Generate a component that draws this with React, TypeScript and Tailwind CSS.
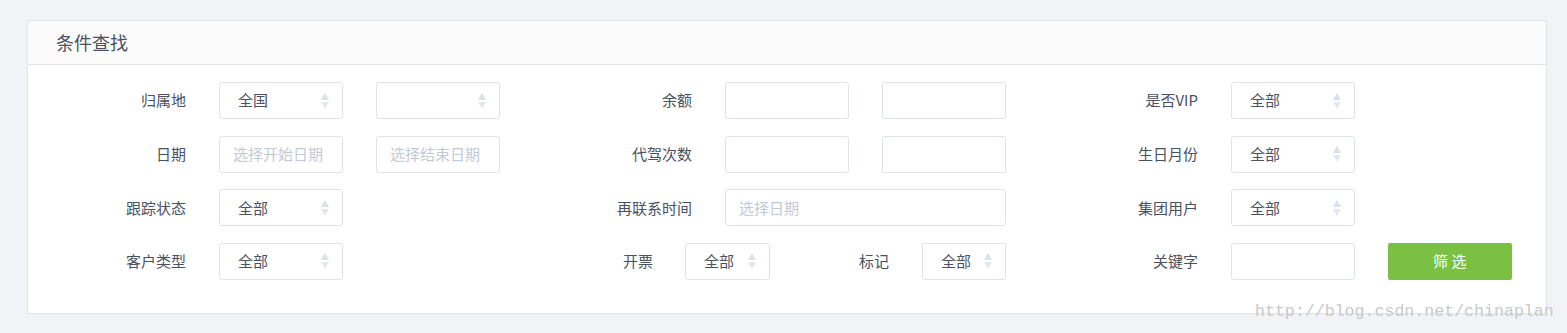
import React from "react";

const font = { fontFamily: '"Noto Sans CJK SC", "Noto Sans", sans-serif' };

const Arrows = () => (
  <svg width="8" height="16" viewBox="0 0 8 16" className="absolute right-[13px] top-1/2 -translate-y-1/2">
    <polygon points="4,0 8,7 0,7" fill="#dce0e7" />
    <polygon points="0,9 8,9 4,16" fill="#e4e8ee" />
  </svg>
);

const Select = ({ value = "", w = "w-[124px]" }: { value?: string; w?: string }) => (
  <div className={`relative h-[37px] ${w} rounded-[3px] border border-[#dfe3ea] bg-white flex items-center pl-[18px] text-[15px] text-[#4a5163]`}>
    {value}
    <Arrows />
  </div>
);

const Input = ({ placeholder = "", w = "w-[124px]" }: { placeholder?: string; w?: string }) => (
  <div className={`h-[37px] ${w} rounded-[3px] border border-[#dfe3ea] bg-white flex items-center pl-[13px] text-[15px] text-[#c3c9d4]`}>
    {placeholder}
  </div>
);

const Label = ({ text, w = "w-[100px]" }: { text: string; w?: string }) => (
  <div className={`${w} shrink-0 text-right text-[15px] text-[#4a5163]`}>{text}</div>
);

const Group = ({ children }: { children: React.ReactNode }) => (
  <div className="flex items-center gap-[33px] w-[414px]">{children}</div>
);

export default function App() {
  return (
    <div className="min-h-[333px] bg-[#f1f3f7] pt-[20px] pl-[27px] pr-[20px] relative" style={font}>
      <div className="border border-[#dfe4ea] bg-white">
        <div className="h-[44px] bg-[#fbfbfc] border-b border-[#dfe4ea] flex items-center pl-[28px] text-[18px] text-[#4a5163]">
          条件查找
        </div>
        <div className="pt-[17px] pb-[33px] pl-[58px] flex flex-col gap-[16.67px]">
          <div className="flex items-center gap-[92px]">
            <Group>
              <Label text="归属地" />
              <Select value="全国" />
              <Select />
            </Group>
            <Group>
              <Label text="余额" />
              <Input />
              <Input />
            </Group>
            <Group>
              <Label text="是否VIP" />
              <Select value="全部" />
            </Group>
          </div>
          <div className="flex items-center gap-[92px]">
            <Group>
              <Label text="日期" />
              <Input placeholder="选择开始日期" />
              <Input placeholder="选择结束日期" />
            </Group>
            <Group>
              <Label text="代驾次数" />
              <Input />
              <Input />
            </Group>
            <Group>
              <Label text="生日月份" />
              <Select value="全部" />
            </Group>
          </div>
          <div className="flex items-center gap-[92px]">
            <Group>
              <Label text="跟踪状态" />
              <Select value="全部" />
            </Group>
            <Group>
              <Label text="再联系时间" />
              <Input placeholder="选择日期" w="w-[281px]" />
            </Group>
            <Group>
              <Label text="集团用户" />
              <Select value="全部" />
            </Group>
          </div>
          <div className="flex items-center gap-[92px]">
            <Group>
              <Label text="客户类型" />
              <Select value="全部" />
            </Group>
            <div className="flex items-center w-[414px]">
              <Label text="开票" w="w-[61px]" />
              <div className="ml-[32px]">
                <Select value="全部" w="w-[85px]" />
              </div>
              <Label text="标记" w="w-[119px]" />
              <div className="ml-[33px]">
                <Select value="全部" w="w-[84px]" />
              </div>
            </div>
            <Group>
              <Label text="关键字" />
              <Input />
              <button className="h-[37px] w-[125px] rounded-[2px] bg-[#7ac143] text-white text-[15px]">
                筛 选
              </button>
            </Group>
          </div>
        </div>
      </div>
      <div
        className="absolute left-[1255px] top-[304px] text-[16.6px] text-[#c9c9c9] leading-none"
        style={{ fontFamily: '"Liberation Mono", monospace' }}
      >
        http://blog.csdn.net/chinaplan
      </div>
    </div>
  );
}
